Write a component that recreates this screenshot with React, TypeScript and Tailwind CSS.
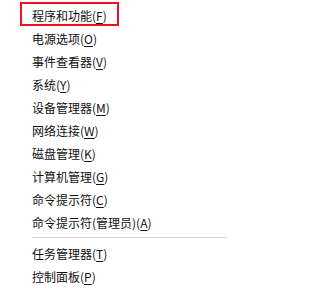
import React from "react";

const items1: [string, string, string][] = [
  ["程序和功能(", "F", ")"],
  ["电源选项(", "O", ")"],
  ["事件查看器(", "V", ")"],
  ["系统(", "Y", ")"],
  ["设备管理器(", "M", ")"],
  ["网络连接(", "W", ")"],
  ["磁盘管理(", "K", ")"],
  ["计算机管理(", "G", ")"],
  ["命令提示符(", "C", ")"],
  ["命令提示符(管理员)(", "A", ")"],
];
const items2: [string, string, string][] = [
  ["任务管理器(", "T", ")"],
  ["控制面板(", "P", ")"],
];

function Row({ it }: { it: [string, string, string] }) {
  return (
    <div className="h-[23px] flex items-center pl-[32px] whitespace-nowrap">
      <span>{it[0]}</span>
      <span className="underline underline-offset-[2px]">{it[1]}</span>
      <span>{it[2]}</span>
    </div>
  );
}

export default function App() {
  return (
    <div
      className="relative w-[227px] h-[290px] bg-white pt-[4px] text-[12px] text-[#111] leading-none overflow-hidden"
      style={{ fontFamily: '"Noto Sans CJK SC", "Noto Sans", sans-serif' }}
    >
      {items1.map((it) => (
        <Row key={it[0]} it={it} />
      ))}
      <div className="ml-[32px] mt-[3px] mb-[4px] h-px bg-[#d9d9d9]" />
      {items2.map((it) => (
        <Row key={it[0]} it={it} />
      ))}
      <div className="absolute left-[20px] top-[2px] w-[99px] h-[24px] border-2 border-[#ee1122]" />
    </div>
  );
}
